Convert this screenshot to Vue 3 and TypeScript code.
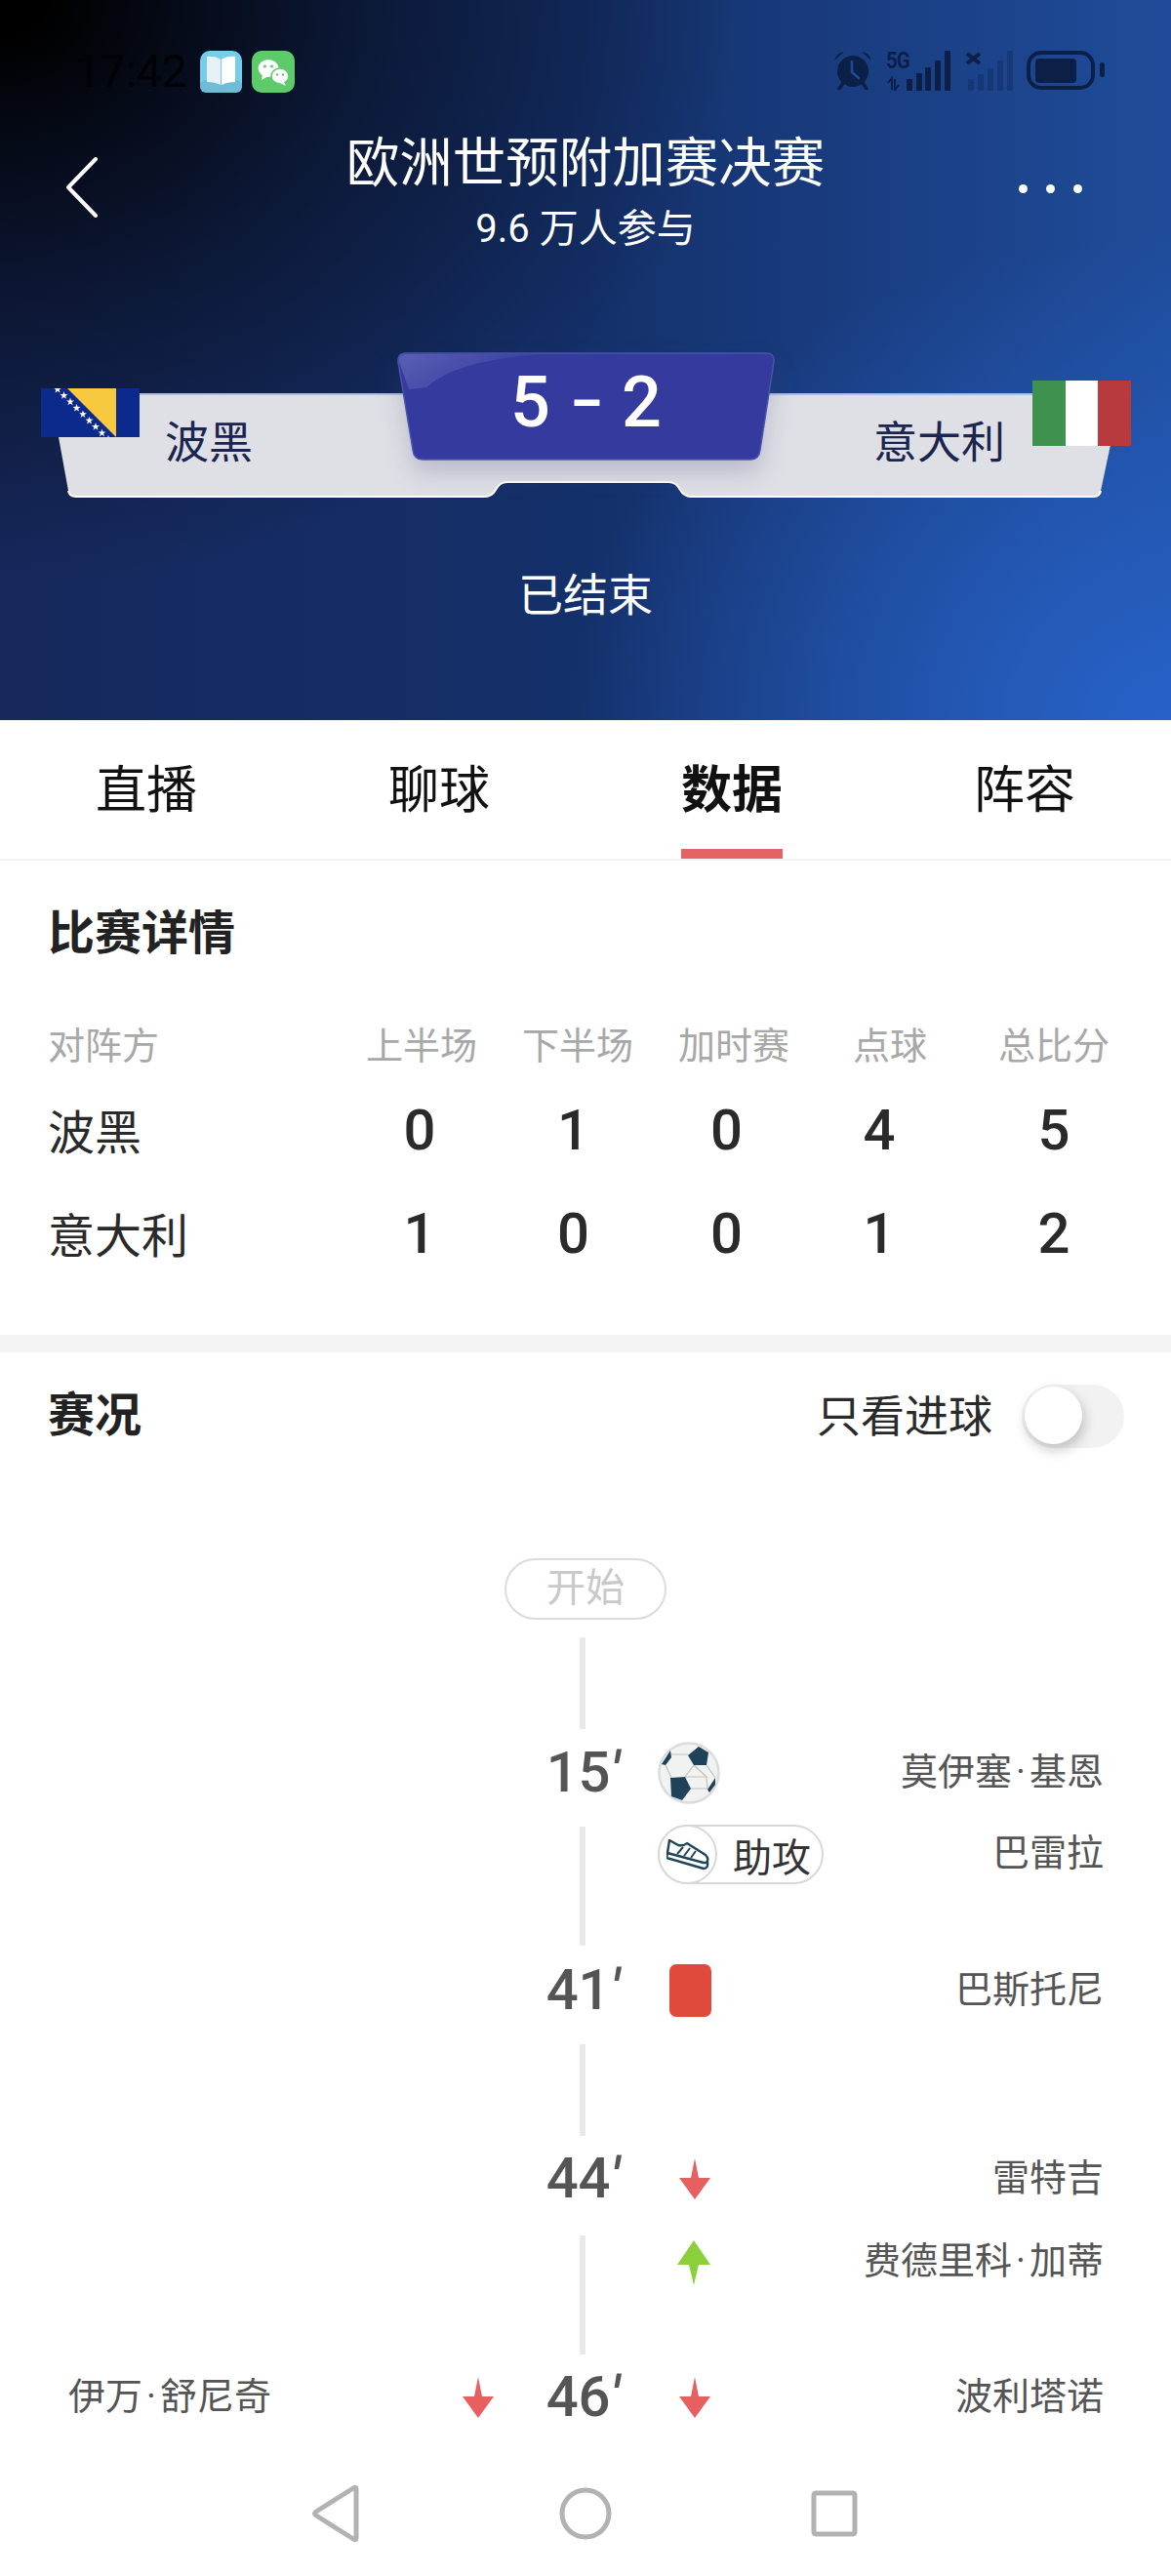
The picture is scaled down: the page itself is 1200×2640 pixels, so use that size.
<script setup lang="ts">
type Icon = 'ball' | 'assist' | 'card' | 'down' | 'up' | ''
interface Step {
  kind: 'line' | 'event'
  gap: number
  h?: number
  tall?: boolean
  minute?: string
  leftName?: string
  leftIcon?: Icon
  icon?: Icon
  name?: string
  nameH?: number
}

const tabs = [
  { label: '直播', active: false },
  { label: '聊球', active: false },
  { label: '数据', active: true },
  { label: '阵容', active: false },
]
const heads = ['对阵方', '上半场', '下半场', '加时赛', '点球', '总比分']
const rows = [
  { team: '波黑', scores: [0, 1, 0, 4, 5] },
  { team: '意大利', scores: [1, 0, 0, 1, 2] },
]
const steps: Step[] = [
  { kind: 'line', gap: 18, h: 94 },
  { kind: 'event', gap: 13, minute: '15', icon: 'ball', name: '莫伊塞·基恩' },
  { kind: 'event', gap: 21, tall: true, icon: 'assist', name: '巴雷拉', nameH: 57 },
  { kind: 'event', gap: 14, minute: '41', icon: 'card', name: '巴斯托尼' },
  { kind: 'line', gap: 23, h: 94 },
  { kind: 'event', gap: 12, minute: '44', icon: 'down', name: '雷特吉' },
  { kind: 'event', gap: 24, tall: true, icon: 'up', name: '费德里科·加蒂', nameH: 55 },
  { kind: 'event', gap: 12, minute: '46', leftName: '伊万·舒尼奇', leftIcon: 'down', icon: 'down', name: '波利塔诺' },
]
const stars = [0, 1, 2, 3, 4, 5, 6, 7, 8]
function star(i: number): string {
  const cx = 17 + i * 6.5
  const cy = 1 + i * 6.4
  const pts: string[] = []
  for (let k = 0; k < 10; k++) {
    const r = k % 2 === 0 ? 4.2 : 1.7
    const a = (Math.PI / 5) * k - Math.PI / 2
    pts.push(`${(cx + r * Math.cos(a)).toFixed(1)},${(cy + r * Math.sin(a)).toFixed(1)}`)
  }
  return pts.join(' ')
}
function parts(name?: string): string[] {
  return name ? name.split('·') : []
}
</script>

<template>
  <div class="page">
    <header class="hero">
      <div class="status">
        <div class="status-left">
          <span class="time">17:42</span>
          <svg class="app" width="43" height="43" viewBox="0 0 43 43">
            <rect width="43" height="43" rx="10" fill="#76cdea" />
            <rect y="30" width="43" height="13" rx="6" fill="#6fbcd8" />
            <path d="M7 6 Q15 5 21 9 V35 Q15 32 7 32 Z" fill="#e8f1f8" />
            <path d="M36 6 Q28 5 22 9 V35 Q28 32 36 32 Z" fill="#fff" />
          </svg>
          <svg class="app" width="44" height="43" viewBox="0 0 44 43">
            <rect width="44" height="43" rx="10" fill="#5ecb6b" />
            <ellipse cx="17" cy="18" rx="10.5" ry="9" fill="#fff" />
            <path d="M11 24 L10 30 L17 26 Z" fill="#fff" />
            <ellipse cx="29" cy="26" rx="9" ry="8" fill="#fff" stroke="#5ecb6b" stroke-width="1.5" />
            <path d="M33 32 L35 36 L29 33 Z" fill="#fff" />
            <circle cx="13.5" cy="16" r="1.5" fill="#5ecb6b" />
            <circle cx="20.5" cy="16" r="1.5" fill="#5ecb6b" />
            <circle cx="26" cy="24.5" r="1.2" fill="#5ecb6b" />
            <circle cx="32" cy="24.5" r="1.2" fill="#5ecb6b" />
          </svg>
        </div>
        <div class="status-right">
          <svg width="40" height="40" viewBox="0 0 40 40">
            <circle cx="20" cy="21" r="16" fill="#0c1f47" />
            <path d="M19 11 V22 L26 28" fill="none" stroke="#1d4a92" stroke-width="2.6" stroke-linecap="round" />
            <path d="M1 10 Q3 2 11 1 Z M39 10 Q37 2 29 1 Z" fill="#0c1f47" />
            <path d="M6 39 L10 33 M34 39 L30 33" stroke="#0c1f47" stroke-width="3.6" stroke-linecap="round" />
          </svg>
          <div class="signal">
            <span class="five-g">5G</span>
            <svg class="sig-bars" width="68" height="41" viewBox="0 0 68 41">
              <path d="M6 40 V28 L2 33 M9 29 V40 L13 35" fill="none" stroke="#0c1f47" stroke-width="2" />
              <rect x="21" y="29" width="6" height="12" rx="1" fill="#0c1f47" />
              <rect x="31" y="23" width="6" height="18" rx="1" fill="#0c1f47" />
              <rect x="40" y="17" width="6" height="24" rx="1" fill="#0c1f47" />
              <rect x="50" y="10" width="6" height="31" rx="1" fill="#0c1f47" />
              <rect x="60" y="0" width="6" height="41" rx="1" fill="#0c1f47" />
            </svg>
          </div>
          <svg width="48" height="41" viewBox="0 0 48 41">
            <path d="M1 3 L14 13 M14 3 L1 13" stroke="#0c1f47" stroke-width="4" />
            <g fill="#0c1f47" opacity="0.32">
              <rect x="2" y="29" width="6" height="12" rx="1" />
              <rect x="12" y="24" width="6" height="17" rx="1" />
              <rect x="22" y="18" width="6" height="23" rx="1" />
              <rect x="32" y="10" width="6" height="31" rx="1" />
              <rect x="42" y="0" width="6" height="41" rx="1" />
            </g>
          </svg>
          <svg width="80" height="40" viewBox="0 0 80 40">
            <rect x="2" y="2" width="66" height="36" rx="13" fill="none" stroke="#0c1f47" stroke-width="4" />
            <rect x="9" y="8" width="42" height="25" rx="4" fill="#0c1f47" />
            <rect x="75" y="12" width="5" height="15" rx="2.5" fill="#0c1f47" />
          </svg>
        </div>
      </div>

      <div class="nav-row">
        <svg class="back" width="36" height="62" viewBox="0 0 36 62">
          <path d="M32 2 L4 31 L32 60" fill="none" stroke="#fff" stroke-width="4" stroke-linecap="round" stroke-linejoin="round" />
        </svg>
        <div class="titles">
          <div class="title">欧洲世预附加赛决赛</div>
          <div class="sub">9.6 万人参与</div>
        </div>
        <div class="dots"><i></i><i></i><i></i></div>
      </div>

      <div class="scoreboard">
        <svg class="bar" width="1200" height="150" viewBox="0 0 1200 150">
          <path d="M52 43 H1149 L1128 142 Q1127 148 1121 148 H708 Q701 148 697 141 Q693 133 685 133 H520 Q512 133 508 141 Q504 148 497 148 H78 Q71 148 70 142 Z" fill="#dfe0e6" />
          <path d="M70 142 Q71 148 78 148 H497 Q504 148 508 141 Q512 133 520 133 H685 Q693 133 697 141 Q701 148 708 148 H1121 Q1127 148 1128 142" fill="none" stroke="#fff" stroke-width="2" />
          <path d="M52 43 H1149" stroke="#aebde0" stroke-width="2" />
        </svg>
        <div class="team">
          <svg class="flag" width="101" height="50" viewBox="0 0 101 50">
            <rect width="101" height="50" fill="#0c2a8c" />
            <path d="M27 0 H77 V50 Z" fill="#f7c93e" />
            <polygon v-for="s in stars" :key="s" :points="star(s)" fill="#fff" />
          </svg>
          <span class="team-name">波黑</span>
        </div>
        <div class="score-box">
          <svg class="score-bg" width="387" height="111" viewBox="0 0 387 111">
            <defs>
              <linearGradient id="shine" x1="0" y1="0" x2="1" y2="0.4">
                <stop offset="0" stop-color="#6a70bd" stop-opacity="0.7" />
                <stop offset="1" stop-color="#6a70bd" stop-opacity="0" />
              </linearGradient>
            </defs>
            <path d="M9 1 H378 Q387 1 386 10 L372 100 Q371 110 362 110 H26 Q17 110 16 100 L1 10 Q0 1 9 1 Z" fill="#343a9e" stroke="#4b54ae" stroke-width="1.5" />
            <path d="M9 2 H150 Q60 8 30 36 L12 38 L2 10 Q1 2 9 2 Z" fill="url(#shine)" />
          </svg>
          <span class="score-text"><b>5</b><b class="dash">–</b><b>2</b></span>
        </div>
        <div class="team team-right">
          <span class="team-name">意大利</span>
          <div class="flag-it"><i class="g"></i><i class="w"></i><i class="r"></i></div>
        </div>
      </div>

      <div class="state">已结束</div>
    </header>

    <nav class="tabs">
      <div v-for="t in tabs" :key="t.label" class="tab" :class="{ active: t.active }">{{ t.label }}</div>
    </nav>

    <section class="detail">
      <h2 class="sec-title">比赛详情</h2>
      <div class="table">
        <div class="thead">
          <span v-for="h in heads" :key="h">{{ h }}</span>
        </div>
        <div v-for="r in rows" :key="r.team" class="trow">
          <span class="tname">{{ r.team }}</span>
          <span v-for="(n, i) in r.scores" :key="i" class="tnum">{{ n }}</span>
        </div>
      </div>
    </section>

    <div class="band"></div>

    <section class="events">
      <div class="ev-head">
        <h2 class="sec-title">赛况</h2>
        <div class="filter">
          <span class="filter-label">只看进球</span>
          <div class="toggle"><i></i></div>
        </div>
      </div>

      <div class="start-wrap"><span class="start">开始</span></div>

      <template v-for="(s, i) in steps" :key="i">
        <div v-if="s.kind === 'line'" class="line" :style="{ height: s.h + 'px', marginTop: s.gap + 'px' }"></div>
        <div v-else class="ev" :class="{ tall: s.tall }" :style="{ marginTop: s.gap + 'px' }">
          <div class="ev-left"><template v-for="(p, k) in parts(s.leftName)" :key="k"><span v-if="k" class="mid">·</span>{{ p }}</template></div>
          <div class="ev-licon">
            <svg v-if="s.leftIcon === 'down'" width="34" height="42" viewBox="0 0 34 42"><path d="M17 0 L21 20 H33 L17 42 L1 20 H13 Z" fill="#e7605f" /></svg>
          </div>
          <div class="ev-min">
            <i v-if="s.tall" class="line line-in"></i>
            <template v-else>{{ s.minute }}<span class="prime">′</span></template>
          </div>
          <div class="ev-icon">
            <svg v-if="s.icon === 'ball'" class="ball" width="64" height="64" viewBox="0 0 64 64">
              <circle cx="32" cy="32" r="30.5" fill="#f1f3f3" stroke="#dcdcdc" stroke-width="2.5" />
              <path d="M14 13 H31 M37 24 L28 36 M50 24 L59 37 M8 24 L14 37 M28 36 L50 36 L37 24 M34 48 H51 M50 36 L51 48" fill="none" stroke="#c4c0b4" stroke-width="1.2" />
              <path d="M42 5 L52 11 L50 24 H37 L31 14 Z M13 37 L28 36 L34 48 L25 60 L14 56 Z" fill="#1d4259" />
              <path d="M13 9 L4 23 L8 24 L14 16 Z M59 37 L51 49 L53 52 L59 44 Z" fill="#1d4259" />
            </svg>
            <div v-else-if="s.icon === 'assist'" class="assist">
              <span class="assist-ic">
                <svg width="44" height="32" viewBox="0 0 44 32">
                  <path d="M3 1 L12 6 Q18 7 21 4 L40 16 Q44 20 41 24 L38 24 L1 14 Z" fill="none" stroke="#1f4559" stroke-width="2.4" stroke-linejoin="round" />
                  <path d="M1 14 L0 19 L38 30 Q43 30 42 23" fill="none" stroke="#1f4559" stroke-width="2.4" stroke-linejoin="round" />
                  <path d="M17 8 L11 15 M24 9 L18 17 M30 12 L25 19" stroke="#1f4559" stroke-width="2" />
                </svg>
              </span>
              <span class="assist-txt">助攻</span>
            </div>
            <i v-else-if="s.icon === 'card'" class="card"></i>
            <svg v-else-if="s.icon === 'down'" class="arrow" width="34" height="42" viewBox="0 0 34 42"><path d="M17 0 L21 20 H33 L17 42 L1 20 H13 Z" fill="#e7605f" /></svg>
            <svg v-else-if="s.icon === 'up'" class="arrow up" width="36" height="46" viewBox="0 0 36 46"><path d="M18 0 L35 25 H23 L18 46 L13 25 H1 Z" fill="#8ad03b" /></svg>
          </div>
          <div class="ev-name" :style="s.nameH ? { height: s.nameH + 'px' } : undefined"><template v-for="(p, k) in parts(s.name)" :key="k"><span v-if="k" class="mid">·</span>{{ p }}</template></div>
        </div>
      </template>
    </section>

    <footer class="sysnav">
      <svg width="60" height="60" viewBox="0 0 60 60">
        <path d="M50 5 V55 Q50 58 47 56 L9 32 Q6 30 9 28 L47 4 Q50 2 50 5 Z" fill="none" stroke="#b2b2b2" stroke-width="5" stroke-linejoin="round" />
      </svg>
      <svg width="60" height="60" viewBox="0 0 60 60">
        <circle cx="30" cy="30" r="24" fill="none" stroke="#b2b2b2" stroke-width="5" />
      </svg>
      <svg width="60" height="60" viewBox="0 0 60 60">
        <rect x="9" y="9" width="42" height="42" rx="2" fill="none" stroke="#b2b2b2" stroke-width="5" />
      </svg>
    </footer>
  </div>
</template>

<style scoped>
.page {
  width: 1200px;
  height: 2640px;
  overflow: hidden;
  background: #fff;
  display: flex;
  flex-direction: column;
  font-family: Roboto, "Noto Sans CJK SC", sans-serif;
  color: #222;
}
.hero {
  height: 738px;
  flex: none;
  background:
    radial-gradient(ellipse 760px 600px at 0 0, #000 6%, rgba(0, 0, 0, 0.75) 25%, rgba(0, 0, 0, 0.45) 50%, rgba(0, 0, 0, 0) 100%),
    radial-gradient(ellipse 620px 500px at 100% 100%, #2762c8 0%, rgba(39, 98, 200, 0) 100%),
    linear-gradient(90deg, #16285c 0%, #14306a 50%, #1f4c9a 100%);
  color: #fff;
}
.status {
  display: flex;
  justify-content: space-between;
  align-items: flex-start;
  padding: 52px 68px 0 77px;
  height: 43px;
}
.status-left { display: flex; align-items: center; gap: 10px; }
.time { font-size: 46px; line-height: 43px; color: #010205; width: 118px; }
.status-right { display: flex; align-items: flex-start; gap: 14px; }
.signal { position: relative; width: 68px; height: 41px; }
.five-g {
  position: absolute;
  left: 0;
  top: -2px;
  font-size: 24px;
  line-height: 24px;
  font-weight: 700;
  letter-spacing: -1px;
  color: #0c1f47;
  transform: scaleX(0.85);
  transform-origin: left;
}
.sig-bars { display: block; }
.nav-row {
  margin-top: 37px;
  height: 128px;
  padding: 0 66px;
  display: grid;
  grid-template-columns: 1fr auto 1fr;
  align-items: start;
}
.back { margin-top: 29px; }
.titles { text-align: center; }
.title { font-size: 54.5px; line-height: 70px; white-space: nowrap; }
.sub { font-size: 40px; line-height: 50px; margin-top: 8px; }
.dots { display: flex; gap: 19px; margin: 57px 25px 0 0; justify-self: end; }
.dots i { width: 9px; height: 9px; border-radius: 50%; background: #fff; display: block; }
.scoreboard {
  position: relative;
  margin-top: 101px;
  height: 150px;
  padding: 0 42px;
  display: flex;
  justify-content: center;
  align-items: flex-start;
}
.bar { position: absolute; left: 0; top: 0; }
.team {
  position: relative;
  flex: 1;
  display: flex;
  align-items: flex-start;
  gap: 26px;
}
.team-right { justify-content: flex-end; gap: 28px; margin-right: -1px; }
.flag { display: block; margin-top: 37px; flex: none; }
.team-name { font-size: 45px; line-height: 60px; margin-top: 64px; color: #1a2550; }
.flag-it { display: flex; width: 101px; height: 67px; margin-top: 29px; flex: none; }
.flag-it i { flex: 1; display: block; }
.flag-it .g { background: #3f9150; }
.flag-it .w { background: #fff; }
.flag-it .r { background: #b93a3d; }
.score-box {
  position: relative;
  width: 387px;
  height: 111px;
  flex: none;
  display: flex;
  justify-content: center;
  align-items: center;
  filter: drop-shadow(0 14px 12px rgba(60, 64, 110, 0.22));
}
.score-bg { position: absolute; left: 0; top: 0; }
.score-text {
  position: relative;
  display: flex;
  align-items: center;
  gap: 21px;
  font-size: 72px;
  line-height: 84px;
  margin-top: -8px;
  color: #fff;
}
.score-text b { font-weight: 500; }
.score-text .dash { font-size: 50px; font-weight: 900; line-height: 84px; }
.state { margin-top: 69px; text-align: center; font-size: 46px; line-height: 60px; }

.tabs {
  height: 144px;
  flex: none;
  display: grid;
  grid-template-columns: repeat(4, 300px);
  grid-template-rows: 142px;
  border-bottom: 2px solid #f2f2f2;
  box-sizing: border-box;
}
.tab {
  position: relative;
  text-align: center;
  font-size: 52px;
  line-height: 146px;
  color: #111;
}
.tab.active { font-weight: 700; }
.tab.active::after {
  content: "";
  position: absolute;
  left: 98px;
  width: 104px;
  bottom: 0;
  height: 10px;
  background: #e46464;
}
.detail { padding: 40px 0 51px; flex: none; }
.sec-title {
  margin: 0;
  padding-left: 49px;
  font-size: 48px;
  line-height: 70px;
  font-weight: 700;
  color: #222;
}
.table { margin-top: 44px; }
.thead, .trow {
  display: grid;
  padding-left: 49px;
  align-items: center;
  text-align: center;
}
.thead {
  grid-template-columns: 303px 160px 160px 160px 160px 176px;
  height: 64px;
  font-size: 38px;
  color: #a8a8a8;
  margin-bottom: 5px;
}
.thead span:first-child { text-align: left; }
.trow {
  grid-template-columns: 302px 158px 157px 157px 156px 202px;
  height: 106px;
}
.tname { text-align: left; font-size: 48px; color: #2a2a2a; padding-bottom: 3px; }
.tnum { font-size: 58px; font-weight: 500; color: #2a2a2a; }
.band { height: 18px; background: #f3f4f6; flex: none; }

.ev-head {
  height: 130px;
  display: flex;
  justify-content: space-between;
  align-items: center;
}
.filter { display: flex; align-items: center; gap: 30px; padding-right: 48px; font-size: 45px; color: #2a2a2a; }
.filter-label { margin-top: -5px; }
.toggle {
  position: relative;
  width: 105px;
  height: 65px;
  border-radius: 33px;
  background: #f2f2f2;
}
.toggle i {
  position: absolute;
  left: 3px;
  top: 2px;
  width: 59px;
  height: 59px;
  border-radius: 50%;
  background: #fff;
  box-shadow: 2px 6px 14px rgba(0, 0, 0, 0.22);
}
.start-wrap { display: flex; justify-content: center; margin-top: 81px; }
.start {
  box-sizing: border-box;
  width: 166px;
  height: 63px;
  border: 2px solid #dcdcdc;
  border-radius: 32px;
  text-align: center;
  line-height: 57px;
  font-size: 40px;
  color: #c9c9c9;
}
.line {
  display: block;
  width: 6px;
  margin-left: 594px;
  background: #e9e9e9;
}
.ev {
  display: grid;
  grid-template-columns: 390px 60px 121px 150px 1fr;
  grid-template-rows: 64px;
  padding: 0 69px 0 70px;
  height: 64px;
  align-items: center;
}
.ev.tall { height: 124px; grid-template-rows: 124px; align-items: flex-start; }
.ev-left { font-size: 38px; line-height: 44px; color: #555; white-space: nowrap; padding-bottom: 2px; }
.mid { margin: 0 4px; }
.ev-licon { display: flex; justify-content: center; }
.ev-licon svg { display: block; }
.ev-min {
  position: relative;
  box-sizing: border-box;
  height: 100%;
  padding: 0 6px 3px 0;
  display: flex;
  justify-content: flex-end;
  align-items: center;
  font-size: 58px;
  line-height: 58px;
  font-weight: 500;
  color: #555;
}
.prime { font-style: italic; }
.line-in {
  position: absolute;
  left: 74px;
  top: 2px;
  bottom: 0;
  margin: 0;
  height: auto;
}
.ev-icon { display: flex; align-items: center; height: 100%; }
.ev.tall .ev-icon { height: auto; }
.ball { display: block; margin-left: 33px; }
.arrow { display: block; margin-left: 54px; }
.arrow.up { margin: 7px 0 0 52px; }
.card {
  display: block;
  width: 43px;
  height: 54px;
  margin-left: 45px;
  border-radius: 7px;
  background: #e04a3c;
}
.assist {
  position: relative;
  display: flex;
  align-items: center;
  box-sizing: border-box;
  width: 170px;
  height: 61px;
  margin-left: 33px;
  border: 2px solid #d8d8d8;
  border-radius: 31px;
  flex: none;
}
.assist-ic {
  position: absolute;
  left: -2px;
  top: -2px;
  box-sizing: border-box;
  width: 61px;
  height: 61px;
  border: 2px solid #d8d8d8;
  border-radius: 50%;
  background: #fff;
  display: flex;
  align-items: center;
  justify-content: center;
}
.assist-txt { margin-left: 75px; font-size: 40px; color: #333; white-space: nowrap; }
.ev-name {
  box-sizing: border-box;
  padding-bottom: 2px;
  font-size: 38px;
  line-height: 44px;
  color: #555;
  white-space: nowrap;
  text-align: right;
}
.ev.tall .ev-name { padding-bottom: 0; display: flex; align-items: center; justify-content: flex-end; }
.sysnav {
  flex: none;
  margin-top: 57px;
  display: flex;
  justify-content: center;
  gap: 195px;
}
</style>
